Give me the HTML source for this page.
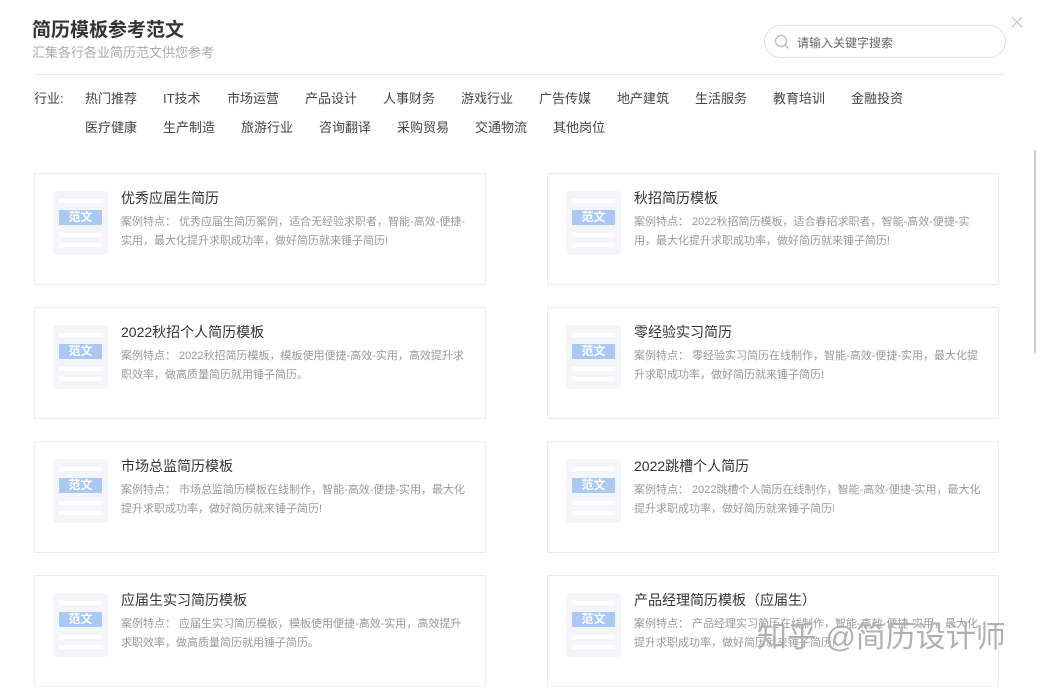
<!DOCTYPE html>
<html><head><meta charset="utf-8"><style>
*{margin:0;padding:0;box-sizing:border-box}
body{width:1037px;height:677px;overflow:hidden;background:#fff;font-family:"Liberation Sans","Noto Sans CJK SC",sans-serif;position:relative}
.abs{position:absolute}
h1{position:absolute;left:32px;top:15px;font-size:19px;font-weight:bold;color:#333}
.sub{left:32px;top:42px;font-size:13px;color:#aaa}
.search{left:764px;top:25px;width:242px;height:33px;border:1px solid #ddd;border-radius:17px}
.search span{position:absolute;left:32px;top:8px;font-size:12px;color:#666}
.hr{left:34px;top:74px;width:970px;height:1px;background:#e6e6e6}
.tags{font-size:13px;color:#444}
.tags span{position:absolute;white-space:nowrap}
.card{position:absolute;width:452px;height:112px;border:1px solid #ebebeb;border-radius:2px}
.icon{position:absolute;left:18px;top:17px;width:55px;height:64px;background:#f3f5f9;border-radius:3px}
.icon i{position:absolute;left:6px;width:43px;height:4px;background:#fff}
.icon b{position:absolute;left:6px;top:19px;width:43px;height:15px;background:#a9c8f3;color:#fff;font-size:12px;text-align:center;line-height:15px;font-weight:bold}
.t{position:absolute;left:86px;top:14px;font-size:14px;color:#333}
.d{position:absolute;left:86px;top:39px;width:350px;font-size:11px;line-height:19px;color:#999}
</style></head><body>
<h1>简历模板参考范文</h1>
<div class="abs sub">汇集各行各业简历范文供您参考</div>
<div class="abs search"><svg class="abs" style="left:9px;top:8px" width="16" height="16" viewBox="0 0 16 16"><circle cx="7" cy="7" r="5.5" fill="none" stroke="#bbb" stroke-width="1.3"/><path d="M11 11l3.5 3.5" stroke="#bbb" stroke-width="1.3"/></svg><span>请输入关键字搜索</span></div>
<svg class="abs" style="left:1011px;top:16px" width="12" height="12" viewBox="0 0 12 12"><path d="M1 1l10 10M11 1L1 11" stroke="#ccc" stroke-width="1.5"/></svg>
<div class="abs hr"></div>
<div class="tags">
<span style="left:34px;top:88px">行业:</span>
<span style="left:85px;top:88px">热门推荐</span><span style="left:163px;top:88px">IT技术</span><span style="left:227px;top:88px">市场运营</span><span style="left:305px;top:88px">产品设计</span><span style="left:383px;top:88px">人事财务</span><span style="left:461px;top:88px">游戏行业</span><span style="left:539px;top:88px">广告传媒</span><span style="left:617px;top:88px">地产建筑</span><span style="left:695px;top:88px">生活服务</span><span style="left:773px;top:88px">教育培训</span><span style="left:851px;top:88px">金融投资</span>
<span style="left:85px;top:117px">医疗健康</span><span style="left:163px;top:117px">生产制造</span><span style="left:241px;top:117px">旅游行业</span><span style="left:319px;top:117px">咨询翻译</span><span style="left:397px;top:117px">采购贸易</span><span style="left:475px;top:117px">交通物流</span><span style="left:553px;top:117px">其他岗位</span>
</div>
<div class="abs" style="left:1034px;top:150px;width:2px;height:203px;background:#ccc"></div>

<div class="card" style="left:34px;top:173px"><div class="icon"><i style="top:8px"></i><b>范文</b><i style="top:42px"></i><i style="top:52px"></i></div><div class="t">优秀应届生简历</div><div class="d">案例特点： 优秀应届生简历案例，适合无经验求职者，智能-高效-便捷-实用，最大化提升求职成功率，做好简历就来锤子简历!</div></div>
<div class="card" style="left:547px;top:173px"><div class="icon"><i style="top:8px"></i><b>范文</b><i style="top:42px"></i><i style="top:52px"></i></div><div class="t">秋招简历模板</div><div class="d">案例特点： 2022秋招简历模板，适合春招求职者，智能-高效-便捷-实用，最大化提升求职成功率，做好简历就来锤子简历!</div></div>
<div class="card" style="left:34px;top:307px"><div class="icon"><i style="top:8px"></i><b>范文</b><i style="top:42px"></i><i style="top:52px"></i></div><div class="t">2022秋招个人简历模板</div><div class="d">案例特点： 2022秋招简历模板，模板使用便捷-高效-实用，高效提升求职效率，做高质量简历就用锤子简历。</div></div>
<div class="card" style="left:547px;top:307px"><div class="icon"><i style="top:8px"></i><b>范文</b><i style="top:42px"></i><i style="top:52px"></i></div><div class="t">零经验实习简历</div><div class="d">案例特点： 零经验实习简历在线制作，智能-高效-便捷-实用，最大化提升求职成功率，做好简历就来锤子简历!</div></div>
<div class="card" style="left:34px;top:441px"><div class="icon"><i style="top:8px"></i><b>范文</b><i style="top:42px"></i><i style="top:52px"></i></div><div class="t">市场总监简历模板</div><div class="d">案例特点： 市场总监简历模板在线制作，智能-高效-便捷-实用，最大化提升求职成功率，做好简历就来锤子简历!</div></div>
<div class="card" style="left:547px;top:441px"><div class="icon"><i style="top:8px"></i><b>范文</b><i style="top:42px"></i><i style="top:52px"></i></div><div class="t">2022跳槽个人简历</div><div class="d">案例特点： 2022跳槽个人简历在线制作，智能-高效-便捷-实用，最大化提升求职成功率，做好简历就来锤子简历!</div></div>
<div class="card" style="left:34px;top:575px"><div class="icon"><i style="top:8px"></i><b>范文</b><i style="top:42px"></i><i style="top:52px"></i></div><div class="t">应届生实习简历模板</div><div class="d">案例特点： 应届生实习简历模板，模板使用便捷-高效-实用，高效提升求职效率，做高质量简历就用锤子简历。</div></div>
<div class="card" style="left:547px;top:575px"><div class="icon"><i style="top:8px"></i><b>范文</b><i style="top:42px"></i><i style="top:52px"></i></div><div class="t">产品经理简历模板（应届生）</div><div class="d">案例特点： 产品经理实习简历在线制作，智能-高效-便捷-实用，最大化提升求职成功率，做好简历就来锤子简历!</div></div>
<div class="abs" style="left:757px;top:612px;font-size:30px;color:rgba(150,150,150,0.75);white-space:nowrap;text-shadow:0 0 1px #fff">知乎 @简历设计师</div>
</body></html>
